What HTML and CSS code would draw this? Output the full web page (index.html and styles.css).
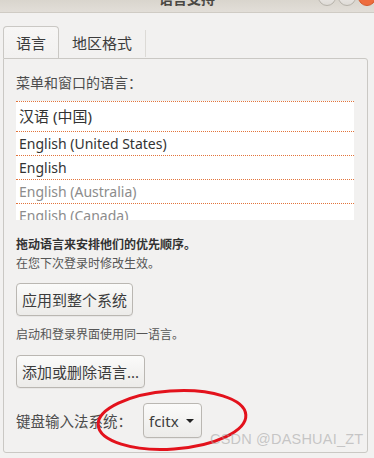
FILE: index.html
```html
<!DOCTYPE html>
<html lang="zh-CN">
<head>
    <meta charset="UTF-8">
    <meta name="viewport" content="width=device-width, initial-scale=1.0">
    <title>语言支持</title>
    <link rel="stylesheet" href="styles.css">
</head>
<body>
    <div class="titlebar">
        <div class="title">语言支持</div>
        <div class="winbtns">
            <span class="winbtn"></span>
            <span class="winbtn max"></span>
            <span class="winbtn close"></span>
        </div>
    </div>

    <div class="tabs">
        <div class="tab active">语言</div>
        <div class="tab">地区格式</div>
    </div>

    <div class="frame">
        <div class="label">菜单和窗口的语言：</div>
        <div class="langlist">
            <div class="row first">汉语 (中国)</div>
            <div class="row">English (United States)</div>
            <div class="row">English</div>
            <div class="row dim">English (Australia)</div>
            <div class="row dim">English (Canada)</div>
        </div>

        <p class="hint bold">拖动语言来安排他们的优先顺序。</p>
        <p class="hint">在您下次登录时修改生效。</p>

        <button class="btn apply">应用到整个系统</button>

        <p class="hint note">启动和登录界面使用同一语言。</p>

        <button class="btn add">添加或删除语言...</button>

        <div class="im-row">
            <span class="label">键盘输入法系统：</span>
            <button class="btn combo">fcitx <span class="arrow"></span></button>
        </div>
    </div>

    <svg class="mark" width="374" height="458" viewBox="0 0 374 458">
        <ellipse cx="172" cy="420" rx="74" ry="29" transform="rotate(-4 172 420)" fill="none" stroke="#e3121c" stroke-width="3"/>
    </svg>
    <div class="watermark">CSDN @DASHUAI_ZT</div>
</body>
</html>
```

FILE: styles.css
```css
body {
    font-family: 'Noto Sans', 'Noto Sans CJK SC', sans-serif;
    background-color: #f2f1f0;
    color: #3c3c3c;
    margin: 0;
    width: 374px;
    height: 458px;
    overflow: hidden;
    position: relative;
}
.titlebar {
    height: 12px;
    background: linear-gradient(#d9d5cd, #e2ded8);
    border-bottom: 1px solid #cfcbc4;
    overflow: hidden;
    display: flex;
    justify-content: center;
    position: relative;
}
.title {
    font-size: 14px;
    font-weight: bold;
    color: #4a4843;
    line-height: 16px;
    margin-top: -9px;
}
.winbtns {
    position: absolute;
    right: 0;
    top: -12px;
    display: flex;
    gap: 2px;
}
.winbtn {
    width: 16px;
    height: 16px;
    border-radius: 50%;
    border: 1px solid #b6b2aa;
    background: linear-gradient(#f4f3f1, #dedbd6);
}
.winbtn.close {
    background: #ee6c3d;
    border-color: #d4572b;
    margin-right: -2px;
}
.tabs {
    display: flex;
    align-items: flex-end;
    margin: 13px 0 0 3px;
    height: 32px;
}
.tab {
    font-size: 15px;
    padding: 0 13px;
    color: #3c3c3c;
    border-right: 1px solid #dcdad6;
    height: 27px;
    line-height: 26px;
    margin-bottom: 1px;
}
.tab.active {
    height: 31px;
    line-height: 32px;
    width: 30px;
    padding: 0 12px;
    margin-bottom: 0;
    border: 1px solid #cac8c4;
    border-bottom: none;
    border-radius: 4px 4px 0 0;
    background: linear-gradient(#f7f6f5, #f2f1f0);
}
.frame {
    margin: 0 6px 0 3px;
    height: 379px;
    border: 1px solid #cac8c4;
    border-radius: 0 3px 3px 3px;
    padding: 14px 0 0 12px;
}
.label {
    font-size: 14px;
    line-height: 20px;
    color: #4c4c4c;
}
.langlist {
    margin-top: 8px;
    width: 338px;
    height: 118px;
    overflow: hidden;
    background-color: #fff;
    border-top: 1px dotted #e2743c;
}
.row {
    font-size: 14px;
    height: 23px;
    line-height: 23px;
    padding-left: 3px;
    border-bottom: 1px dotted #e2743c;
    color: #333;
}
.row.first {
    height: 29px;
    line-height: 29px;
    font-size: 15px;
}
.row.dim {
    color: #8c8c8c;
}
.hint {
    margin: 0;
    font-size: 12px;
    line-height: 19px;
    color: #555;
}
.hint.bold {
    margin-top: 15px;
    font-weight: bold;
    color: #333;
}
.hint.note {
    margin-top: 9px;
}
.btn {
    display: block;
    font-family: inherit;
    font-size: 15px;
    color: #3c3c3c;
    height: 33px;
    padding: 0 5px;
    white-space: nowrap;
    border: 1px solid #bab7b2;
    border-radius: 4px;
    background: linear-gradient(#fbfbfa, #ecebe9);
    box-shadow: 0 1px 0 rgba(0, 0, 0, 0.04);
}
.btn.apply {
    margin-top: 10px;
}
.btn.add {
    margin-top: 11px;
}
.im-row {
    display: flex;
    align-items: center;
    margin-top: 15px;
}
.im-row .label {
    font-size: 14.5px;
    width: 127px;
}
.btn.combo {
    display: flex;
    align-items: center;
    height: 35px;
    width: 59px;
    padding: 0 5px;
    gap: 7px;
}
.arrow {
    width: 0;
    height: 0;
    border-left: 4px solid transparent;
    border-right: 4px solid transparent;
    border-top: 4px solid #222;
}
.mark {
    position: absolute;
    left: 0;
    top: 0;
    pointer-events: none;
}
.watermark {
    position: absolute;
    left: 210px;
    top: 431px;
    font-family: 'Liberation Sans', sans-serif;
    font-size: 14.5px;
    color: rgba(160, 160, 160, 0.55);
    letter-spacing: 0.2px;
}
```
